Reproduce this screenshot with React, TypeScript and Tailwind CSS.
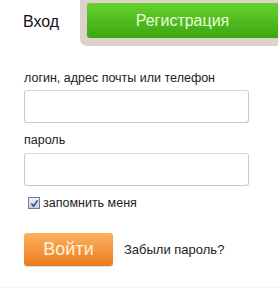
import React from 'react';

const font = { fontFamily: '"Liberation Sans", Arial, sans-serif' };

export default function App() {
    return (
        <div className="w-[278px] h-[289px] bg-white overflow-hidden relative" style={font}>
            {/* tabs */}
            <div className="flex items-start h-[46px]">
                <div className="w-[80px] h-[44px] flex items-center pl-[23px] text-[16px] text-[#111]">Вход</div>
                <div className="flex-1 h-[46px] bg-[#ddd3cb] rounded-bl-[7px] pl-[7px] pt-[3px] pb-[8px]">
                    <div className="h-[35px] rounded-l-[3px] bg-gradient-to-b from-[#66d22f] to-[#3ba610] flex items-center justify-center text-[16px] font-normal text-[#e6fcd8]">
                        Регистрация
                    </div>
                </div>
            </div>

            <div className="px-[24px] pt-[24px]">
                <div className="text-[12.5px] text-[#222] leading-[16px]">логин, адрес почты или телефон</div>
                <input
                    className="mt-[4px] block w-[225px] h-[33px] border border-[#c9c9c9] border-t-[#d8d8d8] rounded-[3px] bg-white outline-none"
                />
                <div className="mt-[9px] text-[12.5px] text-[#222] leading-[16px]">пароль</div>
                <input
                    type="password"
                    className="mt-[5px] block w-[225px] h-[33px] border border-[#c9c9c9] border-t-[#d8d8d8] rounded-[3px] bg-white outline-none"
                />
                <label className="mt-[9px] ml-[4px] h-[16px] flex items-center gap-[3px] text-[12.5px] text-[#222]">
                    <span className="w-[12px] h-[12px] border border-[#6f7c99] bg-gradient-to-b from-[#eef0f6] to-[#c9d0e0] flex items-center justify-center">
                        <svg viewBox="0 0 10 10" className="w-[9px] h-[9px]">
                            <path d="M1.5 5 L4 8 L8.5 1.5" fill="none" stroke="#2d4a9a" strokeWidth="1.8" />
                        </svg>
                    </span>
                    запомнить меня
                </label>
                <div className="mt-[22px] flex items-center">
                    <button className="w-[89px] h-[33px] rounded-[3px] bg-gradient-to-b from-[#fab25e] to-[#ec7a1a] text-[#fff2dc] text-[18px] shadow-[0_1px_1px_rgba(0,0,0,0.15)]">
                        Войти
                    </button>
                    <span className="ml-[11px] text-[13px] text-[#222]">Забыли пароль?</span>
                </div>
            </div>
            <div className="absolute bottom-[1px] left-0 right-0 h-[1px] bg-[#f5f5f5]" />
        </div>
    );
}
